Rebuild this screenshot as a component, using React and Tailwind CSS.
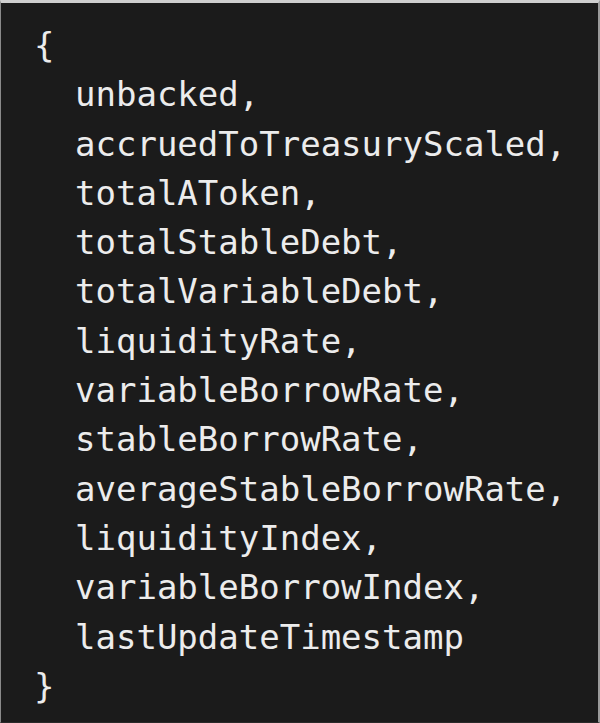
export default function App() {
  const fields = [
    "unbacked,",
    "accruedToTreasuryScaled,",
    "totalAToken,",
    "totalStableDebt,",
    "totalVariableDebt,",
    "liquidityRate,",
    "variableBorrowRate,",
    "stableBorrowRate,",
    "averageStableBorrowRate,",
    "liquidityIndex,",
    "variableBorrowIndex,",
    "lastUpdateTimestamp",
  ];
  return (
    <div className="w-[600px] h-[723px] bg-[#1b1b1b] border-t-[3px] border-t-[#cfcfcf] border-l border-l-[#8a8a8a] border-r-2 border-r-[#9a9a9a] border-b border-b-[#2a2a2a] overflow-hidden">
      <pre
        className="pl-[33px] pt-[18px] m-0 text-[34px] leading-[49.3px] text-[#ececec]"
        style={{ fontFamily: '"DejaVu Sans Mono", monospace' }}
      >
        <div>{"{"}</div>
        {fields.map((f) => (
          <div key={f} className="pl-[41px]">{f}</div>
        ))}
        <div>{"}"}</div>
      </pre>
    </div>
  );
}
